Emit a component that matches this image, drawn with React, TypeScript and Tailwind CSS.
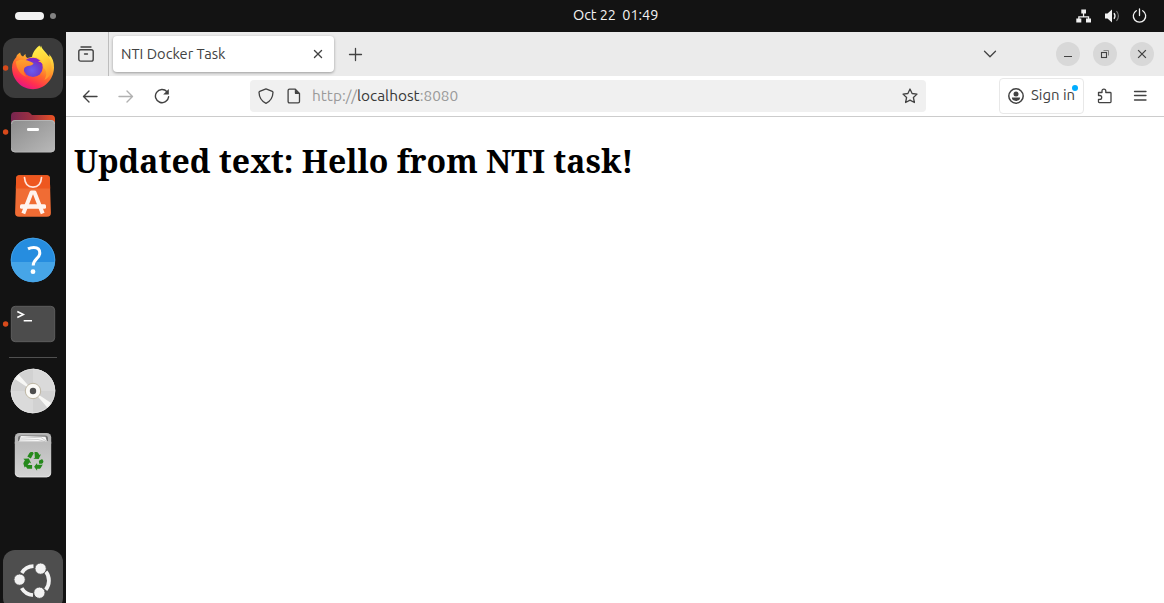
import React from 'react';

type IconProps = { children: React.ReactNode; className?: string; size?: number };

function Icon({ children, className = '', size = 16 }: IconProps) {
  return (
    <svg
      width={size}
      height={size}
      viewBox="0 0 16 16"
      fill="none"
      stroke="currentColor"
      strokeWidth={1.3}
      strokeLinecap="round"
      strokeLinejoin="round"
      className={'block shrink-0 ' + className}
    >
      {children}
    </svg>
  );
}

function DockItem({ children, running = false, active = false }: { children: React.ReactNode; running?: boolean; active?: boolean }) {
  return (
    <svg width="66" height="64" viewBox="-33 -32 66 64" className="block shrink-0">
      {active && <rect x="-30" y="-30" width="60" height="60" rx="12" fill="#3b3b3b" />}
      {running && <circle cx="-27.4" cy="0" r="2.7" fill="#d84a1b" />}
      {children}
    </svg>
  );
}

function Firefox() {
  return (
    <>
      <defs>
        <linearGradient id="fxBody" x1="0.8" y1="0" x2="0.3" y2="1">
          <stop offset="0.1" stopColor="#fff04a" />
          <stop offset="0.38" stopColor="#ffb02e" />
          <stop offset="0.6" stopColor="#ff6a2c" />
          <stop offset="0.82" stopColor="#ff2e50" />
          <stop offset="1" stopColor="#e2138a" />
        </linearGradient>
        <radialGradient id="fxGlobe" cx="0.45" cy="0.65" r="0.65">
          <stop offset="0" stopColor="#6a5cf0" />
          <stop offset="0.6" stopColor="#6b3fcf" />
          <stop offset="1" stopColor="#8b25bd" />
        </radialGradient>
        <linearGradient id="fxTail" x1="0" y1="0" x2="0.3" y2="1">
          <stop offset="0" stopColor="#fff44f" />
          <stop offset="0.5" stopColor="#ffd639" />
          <stop offset="1" stopColor="#ff9a2b" />
        </linearGradient>
        <linearGradient id="fxHead" x1="0" y1="0" x2="0" y2="1">
          <stop offset="0" stopColor="#ffa22c" />
          <stop offset="1" stopColor="#ff6a2a" />
        </linearGradient>
      </defs>
      <path
        d="M-12.8-15.500c.2 2.200 1.500 3.600 2.900 4.100 .8-1.100 1.500-2 2.500-2.600-.2 2.300.4 3.200 1.700 4L6-13c-.2-4 1.200-7.500 2-9.600 1.200 4.200 4 5.600 6.200 9 1 1.300 1.800 1.900 2.200 2.600.1-1.100 0-2-.4-3.100 3.600 3.600 5.300 8.600 5 14.100C20.500 12 11 21.200 0 21.200S-21 12-21-.5c0-4.500 2-8 4.200-10.200.3-2 2-3.800 4-4.800z"
        fill="url(#fxBody)"
      />
      <path
        d="M6.500-22.500C0-17.500-1-12.500-.8-10.500 6-12 11-6 10.500 0c3 2 4 6 1 12C19 8 20 0 17-8c-1-3-5-6-7.500-9-1.400-1.700-2.200-3.300-3-5.500z"
        fill="url(#fxTail)"
      />
      <circle cx="0" cy="-.6" r="9.700" fill="url(#fxGlobe)" />
      <path d="M-7-8.500C0-12 8-9 9.200-3 7.500-4.500 6.500-4.600 5.800-4.500 2-7 0-7-3-6.500z" fill="#8226c8" />
      <path d="M5-6.800q3.200.6 4.800 3L10-5.500 8-7.500z" fill="#ffc534" />
      <path
        d="M-17-6.500c3-1.800 6-2.300 8.500-1.200 3.500-.3 5.500 1.200 9 3-.5 1.600-2 2.200-4.200 2.500-2.500.4-4.700 1-5.200 2.900C-9.800 4-8.500 6.500-6 9-13 7-17 0-17-6.500z"
        fill="url(#fxHead)"
      />
    </>
  );
}

function Files() {
  return (
    <>
      <defs>
        <linearGradient id="folderBack" x1="0" x2="1">
          <stop offset="0" stopColor="#762550" />
          <stop offset="0.5" stopColor="#a03140" />
          <stop offset="1" stopColor="#ec5323" />
        </linearGradient>
        <linearGradient id="folderFront" x1="0" y1="0" x2="1" y2="1">
          <stop offset="0" stopColor="#8c8c8c" />
          <stop offset="1" stopColor="#b9b9b9" />
        </linearGradient>
      </defs>
      <path d="M-22-16q0-4 4-4h12q2 0 3 1l2 2h19q4 0 4 4V-2h-44z" fill="url(#folderBack)" />
      <rect x="-22" y="-12" width="44" height="32.300" rx="4" fill="url(#folderFront)" />
      <path d="M-21.500-8q0-3.500 3.500-3.500h36q3.500 0 3.500 3.500M-21.500 16.500q0 3.500 3.500 3.500h36q3.500 0 3.500-3.500" fill="none" stroke="#bebebe" strokeWidth=".7" />
      <rect x="-6" y="-4" width="12" height="3" rx="1.300" fill="#fff" />
    </>
  );
}

function AppCenter() {
  return (
    <>
      <path d="M-16.800-18.300q.2-2.500 3-2.500h27.600q2.800 0 3 2.500l1.100 35q.2 4-4 4h-27.800q-4.200 0-4-4z" fill="#f06c34" />
      <path d="M-16.800-18.300q.2-2.500 3-2.500h27.600q2.800 0 3 2.500l.4 10.800h-34.400z" fill="#ee571f" />
      <path d="M-8.500-18.500C-8-11-4.500-8.800 0-8.800s8-2.200 8.500-9.700" fill="none" stroke="#ffe5dc" strokeWidth="1.700" strokeLinecap="round" />
      <path d="M-9.700 17.500L-1.500-3.500h3L9.700 17.500" fill="none" stroke="#fff3ee" strokeWidth="4" strokeLinejoin="round" />
      <rect x="-13" y="8.300" width="26" height="4.400" rx="1.500" fill="#fff3ee" />
    </>
  );
}

function Help() {
  return (
    <>
      <circle r="22.200" fill="#268ddf" />
      <path d="M-22.100 2h44.200a22.200 22.200 0 0 1-44.200 0z" fill="#46a5e7" />
      <circle r="21.800" fill="none" stroke="#4fa8e6" strokeWidth=".7" />
      <path d="M-5-11.200C-2.900-12.300-1-12.600 .8-12.600c3.800 0 6 2.200 6 5.600C6.800-1.500 .2-1 .2 5.500" fill="none" stroke="#fff" strokeWidth="3" />
      <circle cx="0" cy="11.700" r="2.400" fill="#fff" />
    </>
  );
}

function Terminal() {
  return (
    <>
      <rect x="-21.700" y="-17.700" width="43.400" height="35.400" rx="4" fill="#4c4c4c" stroke="#626262" strokeWidth=".9" />
      <path d="M-15.700-12.500l6 3-6 3" fill="none" stroke="#fff" strokeWidth="1.600" />
      <rect x="-9.300" y="-4" width="8.300" height="1.500" fill="#fff" />
    </>
  );
}

function Disc() {
  return (
    <>
      <circle r="22.200" fill="#d2d2d2" />
      <path d="M0 0V-22.200A22.200 22.200 0 0 1 22.200 0zM0 0v22.200A22.200 22.200 0 0 1-22.200 0z" fill="#dadada" />
      <path d="M0 0L-18.500-12.200A22.200 22.200 0 0 1-14.500-16.800zM0 0L18.500 12.200A22.200 22.200 0 0 1 14.500 16.800z" fill="#f7f7f5" />
      <circle r="21.800" fill="none" stroke="#e2e2e2" strokeWidth=".8" />
      <circle r="7.700" fill="#fbfaf7" stroke="#b8b09b" strokeWidth=".9" />
      <circle r="3.200" fill="#4e4e4e" />
    </>
  );
}

function Trash() {
  return (
    <>
      <defs>
        <linearGradient id="bin" x1="0" y1="0" x2="0" y2="1">
          <stop offset="0" stopColor="#b4b4b4" />
          <stop offset="1" stopColor="#d3d3d3" />
        </linearGradient>
      </defs>
      <rect x="-18.200" y="-22" width="36.400" height="44.300" rx="4.500" fill="url(#bin)" />
      <path d="M-15-14v-2.500q0-3 3-3h24q3 0 3 3v2.500z" fill="#777" />
      <path d="M-14-13.500l1.800-5.500 24.700.8 1.500 4.700z" fill="#f8f8f8" />
      <path d="M-12.500-16.800l20-1 6 4M-13-15l18-.5 7 2" fill="none" stroke="#a5a5a5" strokeWidth=".5" />
      <path d="M-18.200-13.200h36.400v2h-36.400z" fill="#bcbcbc" />
      <path d="M-17.700 18.500q.5 3.300 4 3.300h27.400q3.500 0 4-3.300" fill="none" stroke="#e6e6e6" strokeWidth=".8" />
      <g fill="#26891c" transform="translate(.5 2)">
        <path d="M-6.200-.6l2.200-3.500q.6-.9 1.600-.9h1.600l1 1.200-2.900 5.300z" />
        <path d="M1-5h2q1.200 0 1.700.9l1.300 2.200 1.500-.9-2.300 4.900-5.400-.4 1.600-1z" />
        <path d="M5.400 3.800l3.200-1.900 1.100 1.900q.5 1-.1 1.800L8.600 6.800H5.600z" />
        <path d="M9.300 7.500l-2.100 3.400q-.6.900-1.700.9H3.600v1.900L.6 9.800l3-3.900v1.900h4.300z" />
        <path d="M-1.400 8.100v3.700h-3.800q-1 0-1.500-.9l-1.300-2.100q-.2-.4.100-.7z" />
        <path d="M-10.200 1.700l5.500-.1 2.400 4.900-1.700-.9-1.900 2.300-3 2.600-1.200-3.700q-.1-.7.300-1.300l1.200-2.300z" />
      </g>
    </>
  );
}

function UbuntuLogo() {
  return (
    <svg width="60" height="60" viewBox="3 550 60 60" className="block shrink-0">
      <g transform="translate(34.500 580.500)" stroke="#f2f2f2" strokeWidth="3.800" fill="none">
        <path d="M-12.700-7.600A14.500 14.500 0 0 1-1-14.300" />
        <path d="M11.400-8.800A14.500 14.500 0 0 1 11.200 9.200" />
        <path d="M-1.500 14.700A14.500 14.500 0 0 1-12.800 7.600" />
      </g>
      <g fill="#f2f2f2" stroke="#4e4e4e" strokeWidth="1">
        <circle cx="19.600" cy="579.600" r="5.700" />
        <circle cx="40.600" cy="568.600" r="5.700" />
        <circle cx="39.400" cy="592.700" r="5.700" />
      </g>
    </svg>
  );
}

function TopBar() {
  return (
    <header className="flex h-8 shrink-0 items-center bg-[#131313] text-[#f2f2f2]">
      <div className="flex w-[573px] items-center gap-[6px] pl-[15px]">
        <span className="h-2 w-[29px] rounded-full bg-[#f2f2f2]" />
        <span className="h-[6px] w-[6px] rounded-full bg-[#828282]" />
      </div>
      <div className="w-[503px] pb-[2px] text-[14.5px] tracking-[-0.08px] whitespace-pre">Oct 22  01:49</div>
      <div className="flex items-center gap-3">
        <svg width="16" height="16" viewBox="0 0 16 16" fill="currentColor" className="block">
          <path d="M5.300 1.500h4.700v4H8.200v2.700h5v2.400H15v4h-5v-4h1.900v-1.200H3.500v1.200h1.800v4H.3v-4h1.900V8.200h4.700V5.500H5.300z" />
        </svg>
        <svg width="16" height="16" viewBox="0 0 16 16" fill="none" stroke="currentColor" className="block">
          <path d="M1 5.500h2.500L8 1.500v13l-4.500-4H1z" fill="currentColor" stroke="none" />
          <path d="M10 5.200q2 2.800 0 5.600" strokeWidth="1.300" />
          <path d="M12.500 3q3.800 5 0 10" stroke="#777" strokeWidth="1.200" />
        </svg>
        <svg width="16" height="16" viewBox="0 0 16 16" fill="none" stroke="currentColor" strokeWidth="1.300" strokeLinecap="round" className="block">
          <path d="M7.500 1v6.500M4.300 2.700a6.200 6.200 0 1 0 6.400 0" />
        </svg>
      </div>
    </header>
  );
}

function Dock() {
  return (
    <nav className="flex w-[66px] shrink-0 flex-col overflow-hidden bg-[#131313] pt-1">
      <DockItem running active><Firefox /></DockItem>
      <DockItem running><Files /></DockItem>
      <DockItem><AppCenter /></DockItem>
      <DockItem><Help /></DockItem>
      <DockItem running><Terminal /></DockItem>
      <div className="mx-[9px] mt-px mb-px h-px shrink-0 bg-[#505050]" />
      <DockItem><Disc /></DockItem>
      <DockItem><Trash /></DockItem>
      <div className="mx-[3px] mt-[63px] h-[60px] shrink-0 rounded-xl bg-[#4e4e4e]">
        <UbuntuLogo />
      </div>
    </nav>
  );
}

function TabStrip() {
  return (
    <div className="flex h-11 shrink-0 items-center bg-[#ebebeb]">
      <div className="flex h-11 w-[43px] items-center border-r border-[#bdbdbd] pl-3">
        <Icon>
          <path d="M3 1h10" />
          <rect x=".8" y="3.700" width="14.400" height="11.400" rx="1.900" strokeWidth="1.400" />
          <path d="M6.500 8h3" />
        </Icon>
      </div>
      <div className="ml-1 flex h-9 w-[221px] items-center justify-between rounded-[4px] bg-white pr-[10px] pl-2 shadow-[0_1px_3px_rgba(0,0,0,0.35)]">
        <span className="pb-px text-[14.667px] whitespace-nowrap">NTI Docker Task</span>
        <Icon size={12}><path d="M3.300 3.300l9.400 9.400M12.700 3.300l-9.400 9.400" strokeWidth="1.800" /></Icon>
      </div>
      <Icon className="ml-[14px] mt-[2px]"><path d="M7.500 1.500v12M1.500 7.500h12" /></Icon>
      <div className="ml-auto flex items-center pr-[10px]">
        <Icon className="mr-[58px]"><path d="M2.500 5.300L8 10.800l5.500-5.500" /></Icon>
        <div className="flex gap-[13px]">
          <span className="flex h-6 w-6 items-center justify-center rounded-full bg-[#d8d8d8]">
            <Icon><path d="M4.500 10.500h7" strokeWidth="1" strokeLinecap="square" /></Icon>
          </span>
          <span className="flex h-6 w-6 items-center justify-center rounded-full bg-[#d8d8d8]">
            <Icon>
              <rect x="4.500" y="6.500" width="5" height="5" strokeWidth="1.100" strokeLinejoin="miter" />
              <path d="M6.500 4.500h5v5" stroke="#858585" strokeWidth="1" strokeLinecap="butt" strokeLinejoin="miter" />
            </Icon>
          </span>
          <span className="flex h-6 w-6 items-center justify-center rounded-full bg-[#d8d8d8]">
            <Icon><path d="M4.600 4.600l6.800 6.800M11.400 4.600l-6.800 6.800" strokeLinecap="square" strokeWidth="1.300" /></Icon>
          </span>
        </div>
      </div>
    </div>
  );
}

function Toolbar() {
  return (
    <div className="flex h-[41px] shrink-0 items-center border-b border-[#cccccc] bg-white">
      <div className="flex w-[184px] items-center gap-5 pl-4">
        <Icon><path d="M15 8.500H1.500M7 3L1.500 8.500 7 14" strokeWidth="1.400" /></Icon>
        <Icon className="text-[#b1b1b1]"><path d="M1 8.500h13.500M9 3l5.500 5.500L9 14" strokeWidth="1.400" /></Icon>
        <Icon>
          <path d="M13 3.700A6.600 6.600 0 1 0 14.600 8.800" strokeWidth="1.400" />
          <path d="M14.800 1v5.600H9.200z" fill="currentColor" stroke="none" />
        </Icon>
      </div>
      <div className="flex h-8 w-[676px] items-center rounded-[4px] bg-[#f0f0f0] pr-2 pl-2">
        <Icon><path d="M8 .9l6.300 2.400q.7.300.7 1C14.800 9.700 12.400 13.300 8 15.300 3.600 13.300 1.200 9.700 1 4.300q0-.7.7-1z" /></Icon>
        <Icon className="ml-3">
          <path d="M3.500 1.200h5.800l4.200 4.200v8q0 1.400-1.400 1.400H3.500q-1.400 0-1.400-1.400V2.600q0-1.400 1.400-1.400z" />
          <path d="M8.800 1.200l4.900 4.900H10q-1.200 0-1.200-1.200z" fill="currentColor" stroke="none" />
        </Icon>
        <span className="ml-[10px] pb-px text-[15.4px] whitespace-nowrap text-[#9a9a9a]">
          http://<span className="text-[#383838]">localhost</span>:8080
        </span>
        <Icon className="ml-auto">
          <path d="M8 1l2.100 4.500 4.900.6-3.600 3.400 1 5L8 12.100l-4.400 2.400 1-5L1 6.100l4.900-.6z" />
        </Icon>
      </div>
      <div className="ml-auto flex items-center pr-4">
        <div className="relative flex h-[36px] w-[85px] items-center rounded-[4px] border border-[#e8e8e8] pl-2">
          <Icon>
            <circle cx="8" cy="8" r="7.200" strokeWidth="1.500" />
            <circle cx="8" cy="5.900" r="2.500" fill="currentColor" stroke="none" />
            <path d="M3.900 9.600h8.200q0 3.300-4.100 3.300T3.900 9.600z" fill="currentColor" stroke="none" />
          </Icon>
          <span className="ml-[7px] pb-px text-[14.9px] whitespace-nowrap">Sign in</span>
          <span className="absolute top-[6px] right-[5px] h-[6px] w-[6px] rounded-full bg-[#00adff]" />
        </div>
        <Icon className="ml-[13px]">
          <path d="M1.500 4.500H5V3.100q0-2 1.900-2t1.900 2v1.400h4.400q.8 0 .8.800v8.500q0 .8-.8.800H2.300q-.8 0-.8-.8v-2.500h1.300q1.900 0 1.900-1.900T2.800 7.500H1.500z" />
        </Icon>
        <Icon className="ml-[19px]"><path d="M2.500 3.500h11.500M2.500 7.500h11.500M2.500 12h11.500" strokeWidth="1.300" /></Icon>
      </div>
    </div>
  );
}

export default function App() {
  return (
    <div className="flex h-[603px] w-[1164px] flex-col overflow-hidden bg-[#131313] font-['Ubuntu','Noto_Sans',sans-serif] text-[#424242]">
      <TopBar />
      <div className="flex min-h-0 flex-1">
        <Dock />
        <div className="flex w-[1098px] flex-col bg-white">
          <TabStrip />
          <Toolbar />
          <main className="px-2 pt-[22px]">
            <h1 className="font-['Noto_Serif','DejaVu_Serif_Condensed','DejaVu_Serif',serif] text-[32px] leading-[44px] font-bold whitespace-nowrap text-black">
              Updated text: Hello from NTI task!
            </h1>
          </main>
        </div>
      </div>
    </div>
  );
}
